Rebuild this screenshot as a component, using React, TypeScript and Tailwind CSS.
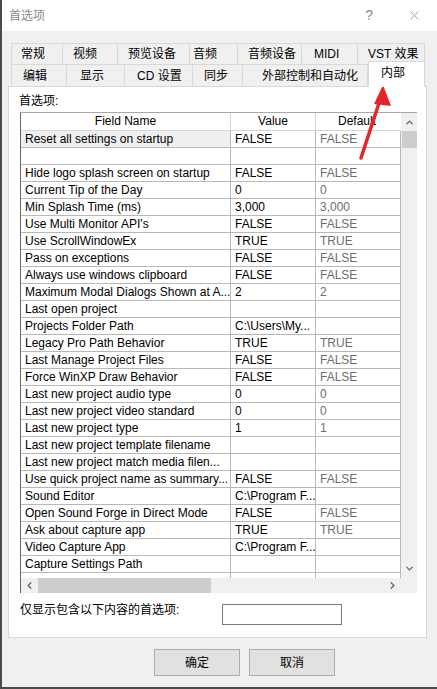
import { ChevronUp, ChevronDown, ChevronLeft, ChevronRight, X } from "lucide-react";

type Row = [string, string, string];

const rows: Row[] = [
  ["Reset all settings on startup", "FALSE", "FALSE"],
  ["", "", ""],
  ["Hide logo splash screen on startup", "FALSE", "FALSE"],
  ["Current Tip of the Day", "0", "0"],
  ["Min Splash Time (ms)", "3,000", "3,000"],
  ["Use Multi Monitor API's", "FALSE", "FALSE"],
  ["Use ScrollWindowEx", "TRUE", "TRUE"],
  ["Pass on exceptions", "FALSE", "FALSE"],
  ["Always use windows clipboard", "FALSE", "FALSE"],
  ["Maximum Modal Dialogs Shown at A...", "2", "2"],
  ["Last open project", "", ""],
  ["Projects Folder Path", "C:\\Users\\My...", ""],
  ["Legacy Pro Path Behavior", "TRUE", "TRUE"],
  ["Last Manage Project Files", "FALSE", "FALSE"],
  ["Force WinXP Draw Behavior", "FALSE", "FALSE"],
  ["Last new project audio type", "0", "0"],
  ["Last new project video standard", "0", "0"],
  ["Last new project type", "1", "1"],
  ["Last new project template filename", "", ""],
  ["Last new project match media filen...", "", ""],
  ["Use quick project name as summary...", "FALSE", "FALSE"],
  ["Sound Editor", "C:\\Program F...", ""],
  ["Open Sound Forge in Direct Mode", "FALSE", "FALSE"],
  ["Ask about capture app", "TRUE", "TRUE"],
  ["Video Capture App", "C:\\Program F...", ""],
  ["Capture Settings Path", "", ""],
  ["", "", ""],
];

const topTabs = [
  { label: "常规", cls: "w-[52px] pl-[9px]" },
  { label: "视频", cls: "w-[55px] pl-[10px]" },
  { label: "预览设备", cls: "w-[72px] pl-[10px]" },
  { label: "音频", cls: "w-[48px] pl-[3px]" },
  { label: "音频设备", cls: "w-[64px] pl-[10px]" },
  { label: "MIDI", cls: "w-[56px] pl-[12px]" },
  { label: "VST 效果", cls: "w-[67px] pl-[10px]" },
];

const lowerTabs = [
  { label: "编辑", cls: "w-[56px] pl-[11px]" },
  { label: "显示", cls: "w-[58px] pl-[13px]" },
  { label: "CD 设置", cls: "w-[68px] pl-[12px]" },
  { label: "同步", cls: "w-[50px] pl-[11px]" },
  { label: "外部控制和自动化", cls: "w-[125px] pl-[19px]" },
];

const cell =
  "h-[17px] border-b border-r border-[#b8b8b8] pl-[4px] leading-[17px] whitespace-nowrap overflow-hidden";

export default function App() {
  return (
    <div className="relative h-[689px] w-[437px] overflow-hidden border-b-2 border-l-2 border-[#4a4a4a] bg-[#f0f0f0] font-['Liberation_Sans','Noto_Sans_CJK_SC',sans-serif] text-[12px] text-black">
      {/* title bar */}
      <div className="flex h-[31px] items-center bg-white pl-[7px]">
        <span className="text-[12px] text-[#8a8a8a]">首选项</span>
        <span className="ml-auto text-[14px] text-[#8a8a8a]">?</span>
        <X size={15} strokeWidth={1.2} className="ml-[34px] mr-[15px] text-[#8a8a8a]" />
      </div>

      {/* tab strip */}
      <div className="ml-[9px] pt-[12px]">
        <div className="flex h-[21px]">
          {topTabs.map((t, i) => (
            <div
              key={t.label}
              className={`${t.cls} flex items-center border-t border-r border-[#d9d9d9] ${i === 0 ? "border-l" : ""}`}
            >
              {t.label}
            </div>
          ))}
        </div>
        <div className="flex h-[22px] items-end">
          {lowerTabs.map((t, i) => (
            <div
              key={t.label}
              className={`${t.cls} flex h-[22px] items-center border-t border-r border-[#d9d9d9] pt-[1px] ${i === 0 ? "border-l" : ""}`}
            >
              {t.label}
            </div>
          ))}
          <div className="relative z-10 -mb-px flex h-[26px] w-[57px] items-start border-x border-t border-[#d9d9d9] bg-white pl-[12px] pt-[2px]">
            内部
          </div>
        </div>
      </div>

      {/* page */}
      <div className="ml-[6px] flex h-[552px] w-[419px] flex-col border border-[#d9d9d9] bg-white pl-[10px] pt-[6px]">
        <div className="h-[16px] leading-[16px]">首选项:</div>

        <div className="ml-[1px] mt-[3px] flex h-[481px] w-[397px] border-t border-[#a8a8a8]">
          <div className="flex w-[381px] flex-col border-l border-[#646464]">
            <div className="h-[465px] overflow-hidden">
              <div className="grid grid-cols-[210px_85px_85px]">
                <div className="h-[18px] border-b border-r border-[#d5d5d5] text-center leading-[17px]">Field Name</div>
                <div className="h-[18px] border-b border-r border-[#d5d5d5] text-center leading-[17px]">Value</div>
                <div className="h-[18px] border-b border-[#d5d5d5] pl-[22px] leading-[17px]">Default</div>
                {rows.map((r, i) => (
                  <div key={i} className="contents">
                    <div className={`${cell} ${i === 0 ? "bg-[#efefef]" : ""}`}>{r[0]}</div>
                    <div className={cell}>{r[1]}</div>
                    <div className={`${cell} text-[#6e6e6e]`}>{r[2]}</div>
                  </div>
                ))}
              </div>
            </div>
            {/* horizontal scrollbar */}
            <div className="flex h-[15px] items-center bg-[#f0f0f0]">
              <div className="flex w-[17px] justify-center">
                <ChevronLeft size={11} strokeWidth={2.6} className="text-[#606060]" />
              </div>
              <div className="h-[15px] w-[173px] bg-[#cdcdcd]" />
              <div className="ml-auto flex w-[17px] justify-center">
                <ChevronRight size={11} strokeWidth={2.6} className="text-[#606060]" />
              </div>
            </div>
          </div>
          {/* vertical scrollbar */}
          <div className="flex w-[16px] flex-col items-center bg-[#f0f0f0]">
            <div className="flex h-[18px] items-center">
              <ChevronUp size={11} strokeWidth={2.6} className="text-[#606060]" />
            </div>
            <div className="h-[17px] w-[15px] bg-[#cdcdcd]" />
            <div className="mt-auto mb-[16px] flex h-[18px] items-center">
              <ChevronDown size={11} strokeWidth={2.6} className="text-[#606060]" />
            </div>
          </div>
        </div>

        <div className="ml-[1px] mt-[11px] flex items-start">
          <span className="mt-[-2px] w-[202px] leading-[16px]">仅显示包含以下内容的首选项:</span>
          <div className="h-[21px] w-[120px] border border-[#7a7a7a] bg-white" />
        </div>
      </div>

      {/* dialog buttons */}
      <div className="ml-[152px] mt-[11px] flex gap-[9px]">
        <button className="h-[27px] w-[86px] border border-[#adadad] bg-[#e1e1e1]">确定</button>
        <button className="h-[27px] w-[86px] border border-[#adadad] bg-[#e1e1e1]">取消</button>
      </div>

      {/* red pointer */}
      <svg className="pointer-events-none absolute left-[-2px] top-0" width="437" height="689">
        <line x1="361" y1="158" x2="380" y2="100" stroke="#e3262d" strokeWidth="3.5" strokeLinecap="round" />
        <polygon points="383,85 374,104 391,106" fill="#e3262d" />
      </svg>
    </div>
  );
}
